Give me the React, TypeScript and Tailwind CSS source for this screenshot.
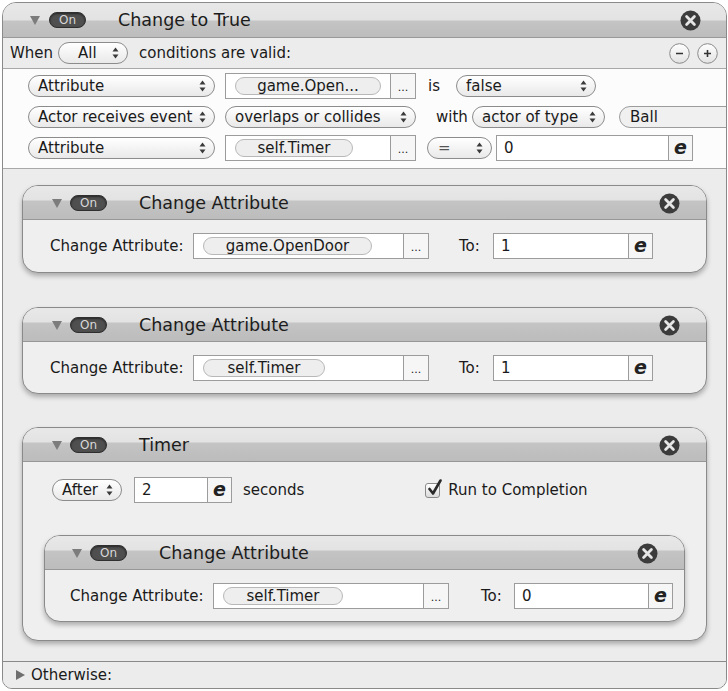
import React from 'react'

const Tri = ({ right = false }: { right?: boolean }) => (
  <svg width="10" height="10" viewBox="0 0 10 10" className="shrink-0">
    {right ? <path d="M1 0 L10 5 L1 10 Z" fill="#6f6f6f" /> : <path d="M0 1 L10 1 L5 10 Z" fill="#7c7c7c" />}
  </svg>
)

const OnBadge = () => (
  <div className="flex items-center justify-center w-[37px] h-[16px] shrink-0 rounded-full bg-[#4f4f4f] border border-[#2f2f2f] shadow-[inset_0_1px_2px_rgba(0,0,0,0.5)]">
    <span className="text-[12px] leading-none text-[#d8d8d8]">On</span>
  </div>
)

const CloseBtn = () => (
  <svg width="21" height="21" viewBox="0 0 21 21" className="shrink-0">
    <circle cx="10.5" cy="10.5" r="10" fill="#3c3c3c" />
    <path d="M6.6 6.6 L14.4 14.4 M14.4 6.6 L6.6 14.4" stroke="#e6e6e6" strokeWidth="2.8" strokeLinecap="round" />
  </svg>
)

const Arrows = () => (
  <svg width="7" height="12" viewBox="0 0 7 12" className="shrink-0">
    <path d="M3.5 0.5 L6.5 4.5 L0.5 4.5 Z M3.5 11.5 L6.5 7.5 L0.5 7.5 Z" fill="#3a3a3a" />
  </svg>
)

const CircleBtn = ({ sign }: { sign: string }) => (
  <svg width="21" height="21" viewBox="0 0 21 21" className="shrink-0">
    <defs>
      <linearGradient id={`g${sign}`} x1="0" y1="0" x2="0" y2="1">
        <stop offset="0" stopColor="#ffffff" />
        <stop offset="1" stopColor="#e2e2e2" />
      </linearGradient>
    </defs>
    <circle cx="10.5" cy="10.5" r="9.8" fill={`url(#g${sign})`} stroke="#8a8a8a" strokeWidth="1" />
    <path d={sign === '+' ? 'M7 10.5 H14 M10.5 7 V14' : 'M7 10.5 H14'} stroke="#333" strokeWidth="1.6" />
  </svg>
)

function Select({ label, className, labelClass = '' }: { label: string; className: string; labelClass?: string }) {
  return (
    <div
      className={`flex items-center justify-between h-[22px] shrink-0 rounded-full border border-[#8c8c8c] bg-gradient-to-b from-white to-[#e9e9e9] pl-[9px] pr-[8px] ${className}`}
    >
      <span className={`text-[15px] leading-none whitespace-nowrap ${labelClass}`}>{label}</span>
      <Arrows />
    </div>
  )
}

function AttrField({ text, boxW, pillW }: { text: string; boxW: string; pillW: string }) {
  return (
    <div className="flex h-[26px] shrink-0">
      <div className={`flex items-center h-full bg-white border border-[#9c9c9c] pl-[9px] ${boxW}`}>
        <div
          className={`h-[18px] rounded-full border border-[#b8b8b8] bg-[#eeeeee] flex items-center justify-center text-[15px] leading-none ${pillW}`}
        >
          {text}
        </div>
      </div>
      <div className="w-[25px] h-full border border-l-0 border-[#9c9c9c] bg-[#f6f6f6] flex items-end justify-center pb-[5px] text-[11px] leading-none">
        ...
      </div>
    </div>
  )
}

function ExprInput({ value, boxW }: { value: string; boxW: string }) {
  return (
    <div className="flex h-[26px] shrink-0">
      <div className={`flex items-center h-full bg-white border border-[#9c9c9c] pl-[7px] text-[15px] leading-none ${boxW}`}>
        {value}
      </div>
      <div className="w-[24px] h-full border border-l-0 border-[#9c9c9c] bg-[#f6f6f6] flex items-center justify-center">
        <span className="text-[19px] leading-none font-bold italic text-[#222] -mt-[2px]">e</span>
      </div>
    </div>
  )
}

function Card({
  title,
  className,
  headPl,
  children,
}: {
  title: string
  className: string
  headPl: string
  children: React.ReactNode
}) {
  return (
    <div
      className={`flex flex-col rounded-[16px] border border-[#8a8a8a] bg-[#efefef] overflow-hidden shadow-[0_3px_5px_rgba(0,0,0,0.28)] ${className}`}
    >
      <div
        className={`h-[34px] shrink-0 flex items-center border-b border-[#979797] bg-[linear-gradient(to_bottom,#e8e8e8_0px,#e3e3e3_14px,#c4c4c4_15px,#bcbcbc_100%)] pr-[26px] ${headPl}`}
      >
        <Tri />
        <div className="ml-[8px]">
          <OnBadge />
        </div>
        <span className="ml-[32px] mt-[3px] text-[17.5px] leading-none text-[#1c1c1c]">{title}</span>
        <div className="ml-auto mt-[1px]">
          <CloseBtn />
        </div>
      </div>
      {children}
    </div>
  )
}

export default function App() {
  return (
    <div className="w-[728px] h-[691px] bg-white pt-[2px] pl-[2px] font-['DejaVu_Sans',sans-serif] text-[#1a1a1a]">
      <div className="w-[725px] h-[687px] flex flex-col border border-[#8a8a8a] rounded-t-[14px] rounded-b-[10px] overflow-hidden bg-[#ececec]">
        {/* header */}
        <div className="h-[35px] shrink-0 flex items-center pl-[27px] pr-[25px] border-b border-[#999] bg-[linear-gradient(to_bottom,#e8e8e8_0px,#e3e3e3_17px,#c4c4c4_18px,#bcbcbc_100%)]">
          <Tri />
          <div className="ml-[9px]">
            <OnBadge />
          </div>
          <span className="ml-[32px] mt-[2px] text-[17.5px] leading-none text-[#1c1c1c]">Change to True</span>
          <div className="ml-auto">
            <CloseBtn />
          </div>
        </div>

        {/* when row */}
        <div className="h-[31px] shrink-0 flex items-center pl-[7px] pr-[8px] border-b border-[#a8a8a8] bg-[#ececec]">
          <span className="text-[15px] leading-none shrink-0">When</span>
          <Select label="All" className="ml-[5px] w-[70px] pl-[19px]" />
          <span className="ml-[11px] text-[15px] leading-none shrink-0">conditions are valid:</span>
          <div className="ml-auto flex gap-[7px]">
            <CircleBtn sign="-" />
            <CircleBtn sign="+" />
          </div>
        </div>

        {/* conditions */}
        <div className="h-[100px] shrink-0 flex flex-col gap-[5px] pt-[4px] pl-[25px] border-b border-[#a8a8a8] bg-[#fcfcfc] overflow-hidden">
          <div className="flex items-center h-[26px]">
            <Select label="Attribute" className="w-[187px]" />
            <div className="ml-[10px] shrink-0">
              <AttrField text="game.Open..." boxW="w-[166px]" pillW="w-[146px]" />
            </div>
            <span className="ml-[12px] w-[16px] shrink-0 text-[15px] leading-none">is</span>
            <Select label="false" className="ml-[12px] w-[140px]" />
          </div>
          <div className="flex items-center h-[26px]">
            <Select label="Actor receives event" className="w-[187px]" />
            <Select label="overlaps or collides" className="ml-[10px] w-[191px] pl-[8px]" />
            <span className="ml-[20px] w-[36px] shrink-0 text-[15px] leading-none">with</span>
            <Select label="actor of type" className="w-[133px] pl-[8px]" />
            <div className="ml-[14px] w-[160px] h-[22px] shrink-0 rounded-full border border-[#9c9c9c] bg-[#f0f0f0] pl-[10px] flex items-center text-[15px] leading-none">
              Ball
            </div>
          </div>
          <div className="flex items-center h-[26px]">
            <Select label="Attribute" className="w-[187px]" />
            <div className="ml-[10px] shrink-0">
              <AttrField text="self.Timer" boxW="w-[166px]" pillW="w-[118px]" />
            </div>
            <Select label="=" className="ml-[11px] w-[65px] pl-[10px]" labelClass="text-[#555]" />
            <div className="ml-[4px] shrink-0">
              <ExprInput value="0" boxW="w-[173px]" />
            </div>
          </div>
        </div>

        {/* actions */}
        <div className="flex-1 flex flex-col pt-[16px] px-[19px]">
          <Card title="Change Attribute" className="h-[88px] shrink-0" headPl="pl-[29px]">
            <div className="flex items-center pl-[27px] pt-[13px]">
              <span className="w-[143px] shrink-0 text-[15px] leading-none">Change Attribute:</span>
              <AttrField text="game.OpenDoor" boxW="w-[211px]" pillW="w-[169px]" />
              <span className="ml-[30px] w-[34px] shrink-0 text-[15px] leading-none">To:</span>
              <ExprInput value="1" boxW="w-[136px]" />
            </div>
          </Card>

          <Card title="Change Attribute" className="h-[87px] mt-[34px] shrink-0" headPl="pl-[29px]">
            <div className="flex items-center pl-[27px] pt-[13px]">
              <span className="w-[143px] shrink-0 text-[15px] leading-none">Change Attribute:</span>
              <AttrField text="self.Timer" boxW="w-[211px]" pillW="w-[122px]" />
              <span className="ml-[30px] w-[34px] shrink-0 text-[15px] leading-none">To:</span>
              <ExprInput value="1" boxW="w-[136px]" />
            </div>
          </Card>

          <Card title="Timer" className="h-[214px] mt-[33px] shrink-0" headPl="pl-[29px]">
            <div className="flex items-center pl-[29px] pt-[15px] h-[41px]">
              <Select label="After" className="w-[70px] pl-[9px]" />
              <div className="ml-[12px] shrink-0">
                <ExprInput value="2" boxW="w-[74px]" />
              </div>
              <span className="ml-[11px] shrink-0 text-[15px] leading-none">seconds</span>
              <div className="ml-[121px] shrink-0 relative w-[15px] h-[15px] rounded-[3px] border border-[#8a8a8a] bg-gradient-to-b from-white to-[#dcdcdc]">
                <svg width="16" height="18" viewBox="0 0 16 18" className="absolute left-[1px] -top-[5px]">
                  <path d="M2.5 10 L6 14.5 L13.5 1.5" stroke="#2a2a2a" strokeWidth="2.6" fill="none" strokeLinecap="round" strokeLinejoin="round" />
                </svg>
              </div>
              <span className="ml-[8px] shrink-0 text-[15px] leading-none">Run to Completion</span>
            </div>
            <div className="px-[21px] mt-[32px]">
              <Card title="Change Attribute" className="h-[87px]" headPl="pl-[27px]">
                <div className="flex items-center pl-[25px] pt-[13px]">
                  <span className="w-[143px] shrink-0 text-[15px] leading-none">Change Attribute:</span>
                  <AttrField text="self.Timer" boxW="w-[211px]" pillW="w-[120px]" />
                  <span className="ml-[32px] w-[33px] shrink-0 text-[15px] leading-none">To:</span>
                  <ExprInput value="0" boxW="w-[135px]" />
                </div>
              </Card>
            </div>
          </Card>
        </div>

        {/* otherwise */}
        <div className="h-[27px] shrink-0 flex items-center pl-[12px] border-t border-[#8a8a8a] bg-[#ececec]">
          <Tri right />
          <span className="ml-[6px] text-[15px] leading-none">Otherwise:</span>
        </div>
      </div>
    </div>
  )
}
